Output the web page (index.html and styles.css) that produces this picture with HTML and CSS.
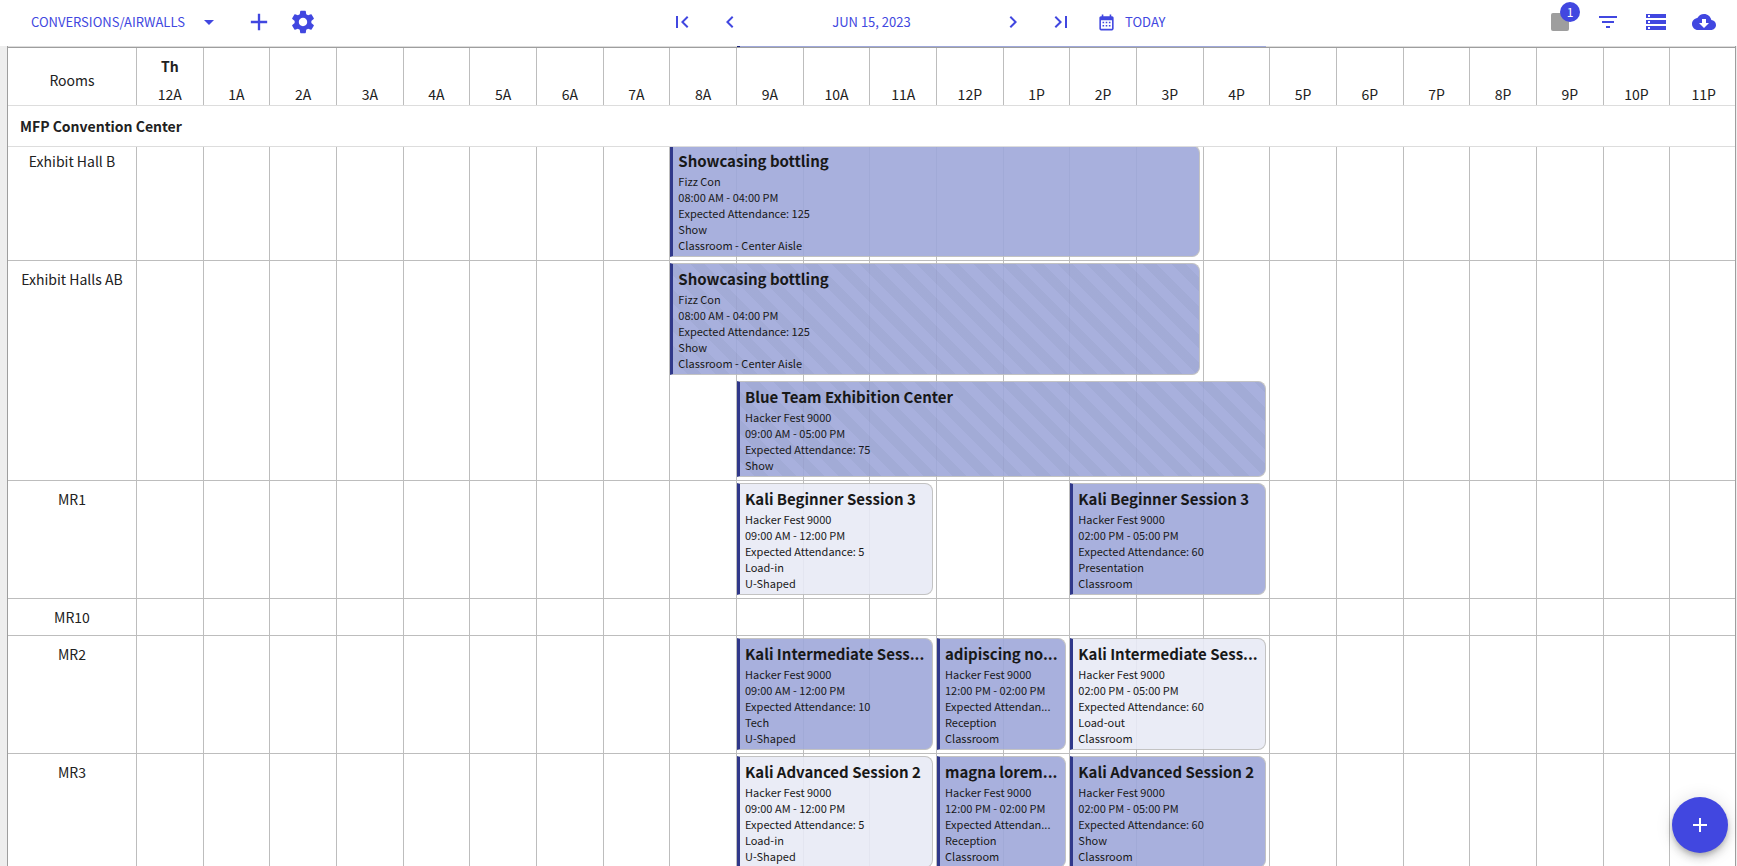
FILE: index.html
```
<!DOCTYPE html>
<html lang="en">
<head>
<meta charset="utf-8">
<title>Conversions/Airwalls</title>
<link rel="stylesheet" href="styles.css">
</head>
<body>
<header class="toolbar">
  <div class="tools tools-left">
    <button class="view-button">CONVERSIONS/AIRWALLS <svg class="icon" viewBox="0 0 24 24"><path d="M7 10l5 5 5-5z"/></svg></button>
    <button class="icon-button" aria-label="Add"><svg class="icon icon-large" viewBox="0 0 24 24"><path d="M19 13h-6v6h-2v-6H5v-2h6V5h2v6h6v2z"/></svg></button>
    <button class="icon-button" aria-label="Settings"><svg class="icon icon-large" viewBox="0 0 24 24"><path d="M19.14 12.94c.04-.3.06-.61.06-.94 0-.32-.02-.64-.07-.94l2.03-1.58c.18-.14.23-.41.12-.61l-1.92-3.32c-.12-.22-.37-.29-.59-.22l-2.39.96c-.5-.38-1.03-.7-1.62-.94l-.36-2.54c-.04-.24-.24-.41-.48-.41h-3.84c-.24 0-.43.17-.47.41l-.36 2.54c-.59.24-1.13.57-1.62.94l-2.39-.96c-.22-.08-.47 0-.59.22L2.74 8.87c-.12.21-.08.47.12.61l2.03 1.58c-.05.3-.09.63-.09.94s.02.64.07.94l-2.03 1.58c-.18.14-.23.41-.12.61l1.92 3.32c.12.22.37.29.59.22l2.39-.96c.5.38 1.03.7 1.62.94l.36 2.54c.05.24.24.41.48.41h3.84c.24 0 .44-.17.47-.41l.36-2.54c.59-.24 1.13-.56 1.62-.94l2.39.96c.22.08.47 0 .59-.22l1.92-3.32c.12-.22.07-.47-.12-.61l-2.01-1.58zM12 15.6c-1.98 0-3.6-1.62-3.6-3.6s1.62-3.6 3.6-3.6 3.6 1.62 3.6 3.6-1.62 3.6-3.6 3.6z"/></svg></button>
  </div>
  <nav class="tools tools-center" aria-label="Date">
    <button class="icon-button" aria-label="First"><svg class="icon" viewBox="0 0 24 24"><path d="M18.41 16.59L13.82 12l4.59-4.59L17 6l-6 6 6 6zM6 6h2v12H6z"/></svg></button>
    <button class="icon-button" aria-label="Previous"><svg class="icon" viewBox="0 0 24 24"><path d="M15.41 7.41L14 6l-6 6 6 6 1.41-1.41L10.83 12z"/></svg></button>
    <button class="date-button">JUN 15, 2023</button>
    <button class="icon-button" aria-label="Next"><svg class="icon" viewBox="0 0 24 24"><path d="M10 6L8.59 7.41 13.17 12l-4.58 4.59L10 18l6-6z"/></svg></button>
    <button class="icon-button" aria-label="Last"><svg class="icon" viewBox="0 0 24 24"><path d="M5.59 7.41L10.18 12l-4.59 4.59L7 18l6-6-6-6zM16 6h2v12h-2z"/></svg></button>
  </nav>
  <div class="tools tools-right">
    <button class="today-button"><svg class="icon icon-small" viewBox="0 0 24 24"><path fill-rule="evenodd" d="M19 4h-1V2h-2v2H8V2H6v2H5C3.900 4 3 4.900 3 6v14c0 1.100.9 2 2 2h14c1.100 0 2-.9 2-2V6c0-1.100-.9-2-2-2zM19 20H5V9h14z"/><path d="M7 11h2v2H7zM11 11h2v2h-2zM15 11h2v2h-2zM7 15h2v2H7zM11 15h2v2h-2zM15 15h2v2h-2z"/></svg>TODAY</button>
    <button class="icon-button badge-anchor" aria-label="Notes"><svg class="icon icon-muted" viewBox="0 0 24 24"><rect x="3" y="3" width="18" height="18" rx="2"/></svg><span class="badge">1</span></button>
    <button class="icon-button" aria-label="Filter"><svg class="icon" viewBox="0 0 24 24"><path d="M10 18h4v-2h-4v2zM3 6v2h18V6H3zm3 7h12v-2H6v2z"/></svg></button>
    <button class="icon-button" aria-label="Rows"><svg class="icon" viewBox="0 0 24 24"><path d="M2 20h20v-4H2v4zm2-3h2v2H4v-2zM2 4v4h20V4H2zm4 3H4V5h2v2zm-4 7h20v-4H2v4zm2-3h2v2H4v-2z"/></svg></button>
    <button class="icon-button" aria-label="Download"><svg class="icon" viewBox="0 0 24 24"><path d="M19.350 10.040C18.670 6.590 15.640 4 12 4 9.110 4 6.600 5.640 5.350 8.040 2.340 8.360 0 10.910 0 14c0 3.310 2.690 6 6 6h13c2.760 0 5-2.240 5-5 0-2.640-2.050-4.780-4.650-4.960zM17 13l-5 5-5-5h3V9h4v4h3z"/></svg></button>
  </div>
</header>
<main class="schedule">
  <div class="peek"><div class="lane"><div class="peek-event"></div></div></div>
  <div class="row head">
    <div class="room">Rooms</div>
    <div class="lane" id="hours"></div>
  </div>
  <h2 class="group">MFP Convention Center</h2>
  <div class="rows" id="rows"></div>
</main>
<button class="fab" aria-label="Create event"><svg class="icon" viewBox="0 0 24 24"><path d="M19 13h-6v6h-2v-6H5v-2h6V5h2v6h6v2z"/></svg></button>
<script src="script.js"></script>
</body>
</html>
```

FILE: styles.css
```
* { box-sizing: border-box; }

body {
  margin: 0;
  height: 100vh;
  display: flex;
  flex-direction: column;
  overflow: hidden;
  background: #eeeeee;
  color: #212121;
  font-family: "Noto Sans CJK SC", "Noto Sans", sans-serif;
  font-size: 14px;
  line-height: 24px;
}

button {
  display: flex;
  align-items: center;
  justify-content: center;
  padding: 0;
  border: 0;
  background: none;
  color: #4147e0;
  font: inherit;
  font-size: 13px;
  cursor: pointer;
}

.icon { width: 24px; height: 24px; flex: none; fill: currentColor; }
.icon-large { width: 28px; height: 28px; }
.icon-small { width: 19px; height: 19px; }
.icon-muted { fill: #9e9e9e; }

.toolbar {
  flex: none;
  height: 46px;
  display: grid;
  grid-template-columns: 1fr auto 1fr;
  align-items: center;
  padding: 0 13px 2px 19px;
  background: #ffffff;
}
.tools { display: flex; align-items: center; }
.tools-left { gap: 4px; }
.tools-right, .tools-center { gap: 8px; }

.icon-button { width: 40px; height: 40px; }
.view-button { gap: 12px; margin-right: 14px; padding-left: 12px; }
.date-button { width: 227px; }
.today-button { gap: 9px; margin: 0 auto 0 16px; }

.badge-anchor { position: relative; }
.badge {
  position: absolute;
  top: 0;
  right: 0;
  width: 20px;
  height: 20px;
  border-radius: 10px;
  background: #4147e0;
  color: #ffffff;
  font-size: 12px;
  line-height: 20px;
}

.schedule {
  flex: 1;
  min-height: 0;
  overflow: hidden;
  margin: 0 1px 0 7px;
  border: solid #9e9e9e;
  border-width: 0 1px;
  background: #ffffff;
}

.lane {
  display: grid;
  grid-template-columns: repeat(24, minmax(0, 1fr));
  margin-right: -2px;
}

.peek {
  height: 2px;
  padding-left: 129px;
  border-bottom: 1px solid #9e9e9e;
  background: #dddddd;
}
.peek-event { grid-column: 10 / 18; height: 1px; margin-right: 4px; background: #9fa8da; border-left: 3px solid #1a237e; }

.row {
  display: grid;
  grid-template-columns: 129px minmax(0, 1fr);
  border-bottom: 1px solid #bdbdbd;
}
.room {
  padding-top: 6px;
  border-right: 1px solid #bdbdbd;
  text-align: center;
}

.head { height: 58px; border-color: #dddddd; }
.head .room { padding-top: 20px; }
.hour {
  display: flex;
  flex-direction: column;
  justify-content: flex-end;
  gap: 6px;
  height: 57px;
  border-right: 1px solid #bdbdbd;
  text-align: center;
  line-height: 22px;
}
.hour:last-child { border-right: 0; }

.group {
  position: relative;
  z-index: 1;
  margin: 0;
  padding: 8px 12px;
  border-bottom: 1px solid #dddddd;
  background: #ffffff;
  font-size: 14px;
  font-weight: 700;
}

.rows { margin-top: -4px; }
.track { position: relative; min-height: 36px; }
.gridlines { position: absolute; inset: 0; }
.gridlines span { border-right: 1px solid #bdbdbd; }
.gridlines span:last-child { border-right: 0; }
.events { position: relative; row-gap: 6px; padding: 2px 0 3px; }

.event {
  min-width: 0;
  margin-right: 4px;
  padding: 3px 4px 3px 5px;
  border: 1px solid #bdbdbd;
  border-left: 3px solid #1a237e;
  border-radius: 0 8px 8px 0;
  background-color: #9fa8da;
  color: #000000;
  opacity: 0.9;
  font-size: 11px;
  line-height: 16px;
}
.event.light { background-color: #e8eaf6; }
.event.striped {
  background-image: repeating-linear-gradient(45deg, transparent 0 10px, rgba(0, 0, 0, 0.035) 10px 20px);
}
.event p, .event h3 {
  margin: 0;
  white-space: nowrap;
}
.event h3 { font-size: 15px; font-weight: 700; line-height: 24px; }

.fab {
  position: fixed;
  right: 9px;
  bottom: 13px;
  width: 56px;
  height: 56px;
  border-radius: 50%;
  background: #4147e0;
  color: #ffffff;
  box-shadow: 0 3px 5px -1px rgba(0, 0, 0, 0.2), 0 6px 10px rgba(0, 0, 0, 0.14), 0 1px 18px rgba(0, 0, 0, 0.12);
}
```

FILE: script.js
```
const rooms = [
  ["Exhibit Hall B", [
    [8, 16, "", "Showcasing bottling", "Fizz Con", "08:00 AM - 04:00 PM", "Expected Attendance: 125", "Show", "Classroom - Center Aisle"]]],
  ["Exhibit Halls AB", [
    [8, 16, "striped", "Showcasing bottling", "Fizz Con", "08:00 AM - 04:00 PM", "Expected Attendance: 125", "Show", "Classroom - Center Aisle"],
    [9, 17, "striped", "Blue Team Exhibition Center", "Hacker Fest 9000", "09:00 AM - 05:00 PM", "Expected Attendance: 75", "Show"]]],
  ["MR1", [
    [9, 12, "light", "Kali Beginner Session 3", "Hacker Fest 9000", "09:00 AM - 12:00 PM", "Expected Attendance: 5", "Load-in", "U-Shaped"],
    [14, 17, "", "Kali Beginner Session 3", "Hacker Fest 9000", "02:00 PM - 05:00 PM", "Expected Attendance: 60", "Presentation", "Classroom"]]],
  ["MR10", []],
  ["MR2", [
    [9, 12, "", "Kali Intermediate Sess...", "Hacker Fest 9000", "09:00 AM - 12:00 PM", "Expected Attendance: 10", "Tech", "U-Shaped"],
    [12, 14, "", "adipiscing no...", "Hacker Fest 9000", "12:00 PM - 02:00 PM", "Expected Attendan...", "Reception", "Classroom"],
    [14, 17, "light", "Kali Intermediate Sess...", "Hacker Fest 9000", "02:00 PM - 05:00 PM", "Expected Attendance: 60", "Load-out", "Classroom"]]],
  ["MR3", [
    [9, 12, "light", "Kali Advanced Session 2", "Hacker Fest 9000", "09:00 AM - 12:00 PM", "Expected Attendance: 5", "Load-in", "U-Shaped"],
    [12, 14, "", "magna lorem...", "Hacker Fest 9000", "12:00 PM - 02:00 PM", "Expected Attendan...", "Reception", "Classroom"],
    [14, 17, "", "Kali Advanced Session 2", "Hacker Fest 9000", "02:00 PM - 05:00 PM", "Expected Attendance: 60", "Show", "Classroom"]]]
];

const hourLabel = h => (h % 12 || 12) + (h < 12 ? "A" : "P");

document.getElementById("hours").innerHTML = Array.from({ length: 24 }, (_, h) =>
  `<div class="hour">${h === 0 ? "<b>Th</b>" : ""}<span>${hourLabel(h)}</span></div>`).join("");

const eventHtml = ([start, end, kind, title, ...lines]) =>
  `<article class="event ${kind}" style="grid-column:${start + 1}/${end + 1}"><h3>${title}</h3>${lines.map(t => `<p>${t}</p>`).join("")}</article>`;

document.getElementById("rows").innerHTML = rooms.map(([name, events]) =>
  `<section class="row"><div class="room">${name}</div><div class="track"><div class="lane gridlines">${"<span></span>".repeat(24)}</div>${
    events.length ? `<div class="lane events">${events.map(eventHtml).join("")}</div>` : ""}</div></section>`).join("");
```
